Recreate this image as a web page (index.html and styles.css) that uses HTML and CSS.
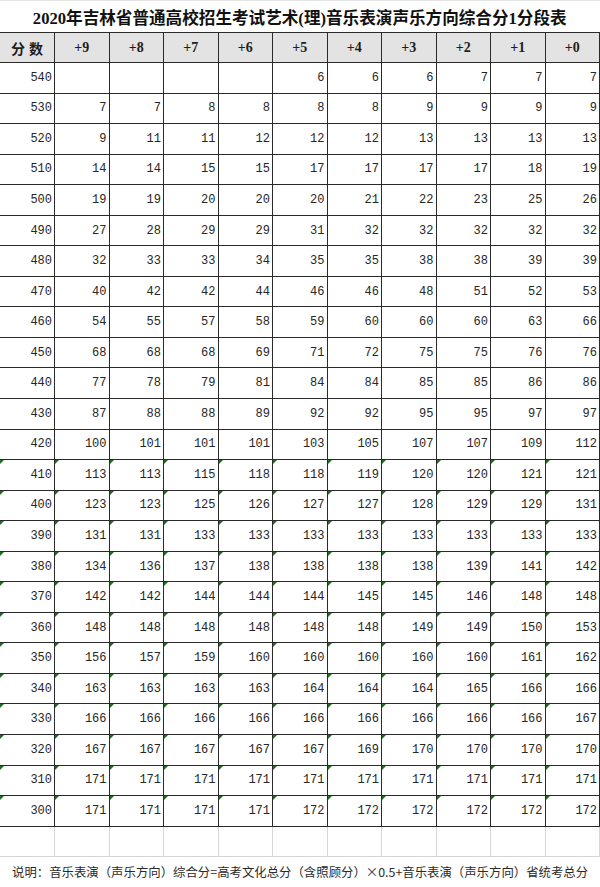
FILE: index.html
```html
<!DOCTYPE html>
<html lang="zh-CN">
<head>
<meta charset="utf-8">
<title>2020年吉林省普通高校招生考试艺术(理)音乐表演声乐方向综合分1分段表</title>
<link rel="stylesheet" href="styles.css">
</head>
<body>
<table class="sheet">
  <tr class="title-row"><td colspan="11">2020年吉林省普通高校招生考试艺术(理)音乐表演声乐方向综合分1分段表</td></tr>
  <tr class="head"><td>分数</td><td>+9</td><td>+8</td><td>+7</td><td>+6</td><td>+5</td><td>+4</td><td>+3</td><td>+2</td><td>+1</td><td>+0</td></tr>
  <tr class="row"><td>540</td><td></td><td></td><td></td><td></td><td>6</td><td>6</td><td>6</td><td>7</td><td>7</td><td>7</td></tr>
  <tr class="row"><td>530</td><td>7</td><td>7</td><td>8</td><td>8</td><td>8</td><td>8</td><td>9</td><td>9</td><td>9</td><td>9</td></tr>
  <tr class="row"><td>520</td><td>9</td><td>11</td><td>11</td><td>12</td><td>12</td><td>12</td><td>13</td><td>13</td><td>13</td><td>13</td></tr>
  <tr class="row"><td>510</td><td>14</td><td>14</td><td>15</td><td>15</td><td>17</td><td>17</td><td>17</td><td>17</td><td>18</td><td>19</td></tr>
  <tr class="row"><td>500</td><td>19</td><td>19</td><td>20</td><td>20</td><td>20</td><td>21</td><td>22</td><td>23</td><td>25</td><td>26</td></tr>
  <tr class="row"><td>490</td><td>27</td><td>28</td><td>29</td><td>29</td><td>31</td><td>32</td><td>32</td><td>32</td><td>32</td><td>32</td></tr>
  <tr class="row"><td>480</td><td>32</td><td>33</td><td>33</td><td>34</td><td>35</td><td>35</td><td>38</td><td>38</td><td>39</td><td>39</td></tr>
  <tr class="row"><td>470</td><td>40</td><td>42</td><td>42</td><td>44</td><td>46</td><td>46</td><td>48</td><td>51</td><td>52</td><td>53</td></tr>
  <tr class="row"><td>460</td><td>54</td><td>55</td><td>57</td><td>58</td><td>59</td><td>60</td><td>60</td><td>60</td><td>63</td><td>66</td></tr>
  <tr class="row"><td>450</td><td>68</td><td>68</td><td>68</td><td>69</td><td>71</td><td>72</td><td>75</td><td>75</td><td>76</td><td>76</td></tr>
  <tr class="row"><td>440</td><td>77</td><td>78</td><td>79</td><td>81</td><td>84</td><td>84</td><td>85</td><td>85</td><td>86</td><td>86</td></tr>
  <tr class="row"><td>430</td><td>87</td><td>88</td><td>88</td><td>89</td><td>92</td><td>92</td><td>95</td><td>95</td><td>97</td><td>97</td></tr>
  <tr class="row"><td>420</td><td>100</td><td>101</td><td>101</td><td>101</td><td>103</td><td>105</td><td>107</td><td>107</td><td>109</td><td>112</td></tr>
  <tr class="row txt"><td>410</td><td>113</td><td>113</td><td>115</td><td>118</td><td>118</td><td>119</td><td>120</td><td>120</td><td>121</td><td>121</td></tr>
  <tr class="row txt"><td>400</td><td>123</td><td>123</td><td>125</td><td>126</td><td>127</td><td>127</td><td>128</td><td>129</td><td>129</td><td>131</td></tr>
  <tr class="row txt"><td>390</td><td>131</td><td>131</td><td>133</td><td>133</td><td>133</td><td>133</td><td>133</td><td>133</td><td>133</td><td>133</td></tr>
  <tr class="row txt"><td>380</td><td>134</td><td>136</td><td>137</td><td>138</td><td>138</td><td>138</td><td>138</td><td>139</td><td>141</td><td>142</td></tr>
  <tr class="row txt"><td>370</td><td>142</td><td>142</td><td>144</td><td>144</td><td>144</td><td>145</td><td>145</td><td>146</td><td>148</td><td>148</td></tr>
  <tr class="row txt"><td>360</td><td>148</td><td>148</td><td>148</td><td>148</td><td>148</td><td>148</td><td>149</td><td>149</td><td>150</td><td>153</td></tr>
  <tr class="row txt"><td>350</td><td>156</td><td>157</td><td>159</td><td>160</td><td>160</td><td>160</td><td>160</td><td>160</td><td>161</td><td>162</td></tr>
  <tr class="row txt"><td>340</td><td>163</td><td>163</td><td>163</td><td>163</td><td>164</td><td>164</td><td>164</td><td>165</td><td>166</td><td>166</td></tr>
  <tr class="row txt"><td>330</td><td>166</td><td>166</td><td>166</td><td>166</td><td>166</td><td>166</td><td>166</td><td>166</td><td>166</td><td>167</td></tr>
  <tr class="row txt"><td>320</td><td>167</td><td>167</td><td>167</td><td>167</td><td>167</td><td>169</td><td>170</td><td>170</td><td>170</td><td>170</td></tr>
  <tr class="row txt"><td>310</td><td>171</td><td>171</td><td>171</td><td>171</td><td>171</td><td>171</td><td>171</td><td>171</td><td>171</td><td>171</td></tr>
  <tr class="row txt"><td>300</td><td>171</td><td>171</td><td>171</td><td>171</td><td>172</td><td>172</td><td>172</td><td>172</td><td>172</td><td>172</td></tr>
  <tr class="blank"><td></td><td></td><td></td><td></td><td></td><td></td><td></td><td></td><td></td><td></td><td></td></tr>
  <tr class="note"><td colspan="11">说明：音乐表演（声乐方向）综合分=高考文化总分（含照顾分）×0.5+音乐表演（声乐方向）省统考总分</td></tr>
</table>
</body>
</html>
```

FILE: styles.css
```css
html, body {
  margin: 0;
  padding: 0;
  background: #ffffff;
}

.sheet {
  border-collapse: collapse;
  table-layout: fixed;
  width: 600px;
  color: #1e1e1e;
}

.sheet td {
  padding: 0;
  position: relative;
}

.title-row td {
  height: 30px;
  padding-top: 1px;
  text-align: center;
  font-family: "Liberation Serif", "Noto Sans CJK SC", serif;
  font-weight: bold;
  font-size: 16.6px;
  color: #111;
  border-bottom: 1px solid #2a2a2a;
  border-top: 1px solid #e4e4e4;
}

.head td {
  height: 29px;
  background: #e3e3e3;
  text-align: center;
  font-family: "Liberation Serif", "Noto Sans CJK SC", serif;
  font-weight: bold;
  font-size: 14px;
  border: 1px solid #2a2a2a;
}

.head td:first-child {
  font-family: "Noto Sans CJK SC", sans-serif;
  font-size: 14px;
  letter-spacing: 4px;
  padding-left: 4px;
}

.row td {
  height: 29.56px;
  text-align: right;
  padding-right: 2px;
  font-family: "Liberation Mono", monospace;
  font-size: 12px;
  color: #262626;
  border: 1px solid #2a2a2a;
}

.sheet tr td:first-child {
  border-left: none;
}

.txt td::before {
  content: "";
  position: absolute;
  top: 0;
  left: 0;
  border-top: 4px solid #1f6b1f;
  border-right: 4px solid transparent;
}

.blank td {
  height: 29px;
  border: 1px solid #d6d6d6;
}

.note td {
  height: 30px;
  padding-left: 12px;
  text-align: left;
  font-family: "Noto Sans CJK SC", sans-serif;
  font-size: 12.4px;
  color: #2a2a2a;
  border-top: 1px solid #d6d6d6;
  border-bottom: 2px solid #dde3ea;
}
```
